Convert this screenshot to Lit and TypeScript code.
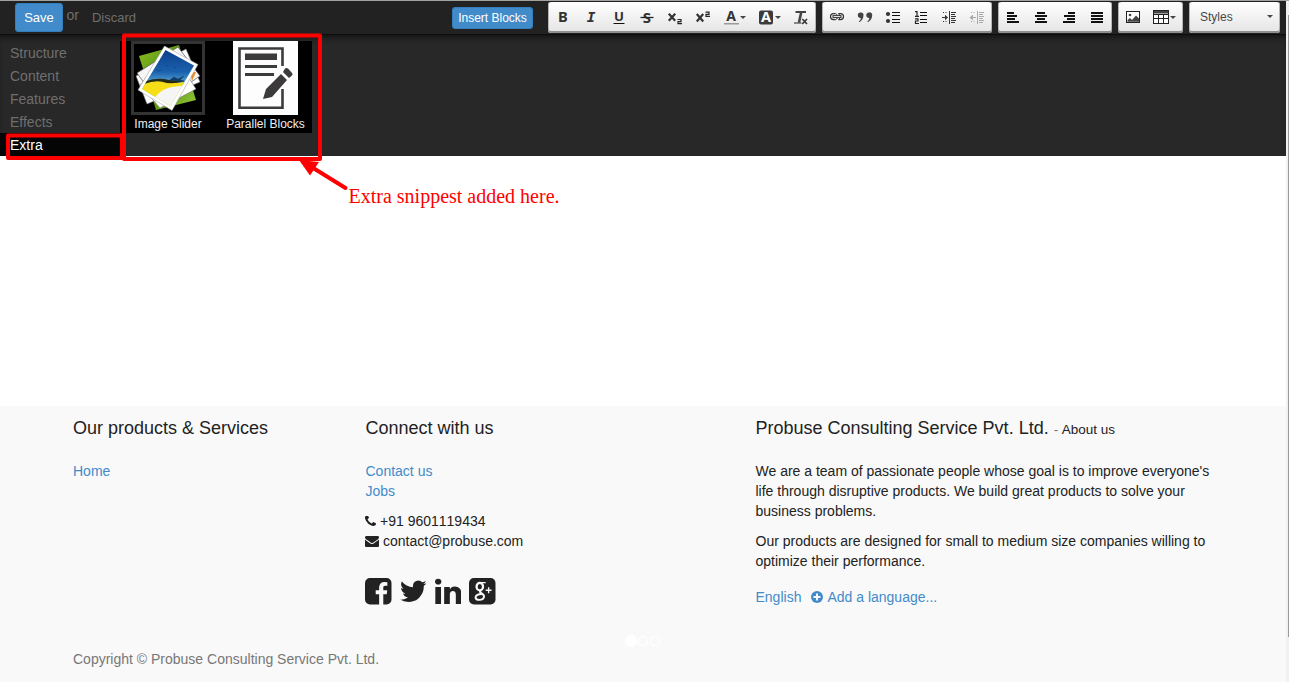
import { LitElement, html, css, svg } from "lit";
import { customElement } from "lit/decorators.js";

const letter = (t: string, size: number, y: number, extra = "") =>
  svg`<text x="8" y=${y} font-size=${size} text-anchor="middle" class="g ${extra}">${t}</text>`;
const rows = (spans: number[][]) =>
  spans.map(([x, y, w]) => svg`<rect x=${x} y=${y} width=${w} height="2" fill="#111"/>`);
const thin = (spans: number[][], c = "#222") =>
  spans.map(([x, y, w]) => svg`<rect x=${x} y=${y} width=${w} height="1" fill=${c}/>`);

const indent = (c: string, flip: boolean) => svg`
  <path d="M8.500 2v13" stroke=${c}/>
  ${thin([[10, 3, 5], [10, 5, 4], [10, 7, 5], [10, 9, 4], [10, 11, 5], [10, 13, 4]], c)}
  <path d="M2 3.500h5M2 12.500h5" stroke=${c} stroke-dasharray="1 1.500"/>
  <path d=${flip ? "M7 8.500H2" : "M1 8.500H6"} stroke=${c}/>
  <path d=${flip ? "M0.500 8.500L4 5.500v6z" : "M7 8.500L4 5.800v5.400z"} fill=${c}/>`;

const ICONS: Record<string, unknown> = {
  bold: letter("B", 14.7, 13.3),
  italic: svg`<text x="8" y="13.300" font-size="14.500" text-anchor="middle" class="mono">I</text>`,
  underline: svg`${letter("U", 13.2, 12.2)}<path d="M2.500 14.500h11" stroke="#111" stroke-width="1"/>`,
  strike: svg`${letter("S", 15, 13.5)}<path d="M1.500 8.500h13" stroke="#222" stroke-width="1.300"/>`,
  sub: svg`<path d="M1.800 4.800l6.400 7M8.200 4.800l-6.400 7" stroke="#333" stroke-width="2.200"/><path d="M10.500 10.500h3.500v2.200h-3v2h4" fill="none" stroke="#222" stroke-width="1.200"/>`,
  sup: svg`<path d="M1.800 5l6.400 7.500M8.200 5l-6.400 7.500" stroke="#333" stroke-width="2.200"/><path d="M10.500 3.200h3.500v2.200h-3v2h4" fill="none" stroke="#222" stroke-width="1.200"/>`,
  color: svg`${letter("A", 14, 12.4)}<rect x="1" y="14" width="15" height="1.500" fill="#999"/>`,
  back: svg`<rect x="1" y="1.500" width="14" height="14" rx="2" fill="#3b3b3b"/>${letter("A", 14.5, 13.4, "inv")}`,
  clear: svg`<path d="M2.500 3h10.500" stroke="#444" stroke-width="2"/><path d="M8.300 3L6 13.500" stroke="#444" stroke-width="2.600"/><path d="M1 14h7.500" stroke="#222"/><path d="M9.300 10l4.700 5M14 10l-4.700 5" stroke="#333" stroke-width="1.600"/>`,
  link: svg`<g fill="none" stroke="#333" stroke-width="1.200"><path d="M6.500 4.600H4.500a3 3 0 0 0 0 6h2"/><path d="M9.500 4.600h2a3 3 0 0 1 0 6h-2"/><rect x="4" y="6.600" width="8" height="2" stroke-width="1"/><path d="M6.500 4.600Q8 5 8.300 6.500M9.500 4.600Q10.500 5 10.500 6.500M6.500 10.600q1.500-.3 1.800-1.800M9.500 10.600q1-.3 1-1.800" stroke-width="1"/></g>`,
  quote: svg`<g fill="#444"><path d="M3.500 3.500a2.500 2.500 0 0 1 3 2.800c0 3-1.500 5-4 7l-.7-.7c1.400-1.300 2-2.500 2-3.700A2.600 2.600 0 0 1 .8 6.200a2.700 2.700 0 0 1 2.700-2.700z"/><path d="M12 3.500a2.500 2.500 0 0 1 3.200 2.800c0 3-1.500 5-4.200 7l-.7-.7c1.400-1.300 2-2.500 2-3.700a2.600 2.600 0 0 1-3-2.700A2.700 2.700 0 0 1 12 3.500z"/></g>`,
  ul: svg`<circle cx="3" cy="5" r="2.100" fill="#333"/><circle cx="3" cy="12" r="2.100" fill="#333"/>${thin([[7, 3, 8], [7, 6, 8], [7, 10, 8], [7, 13, 8]], "#111")}`,
  ol: svg`<path d="M2 2.600h2v4.400M2 7.300h4M2 9.800h3v2.200H2.500v2.500h3.500" fill="none" stroke="#222" stroke-width="1.200"/>${thin([[7, 3, 7], [7, 6, 7], [7, 10, 7], [7, 13, 7]], "#111")}`,
  indent: indent("#333", false),
  outdent: indent("#aaa", true),
  left: rows([[2, 3, 7], [2, 6, 10], [2, 9, 8], [2, 12, 12]]),
  center: rows([[4, 3, 8], [2, 6, 12], [4, 9, 8], [2, 12, 12]]),
  right: rows([[7, 3, 7], [3, 6, 11], [6, 9, 8], [2, 12, 12]]),
  justify: rows([[2, 3, 12], [2, 6, 12], [2, 9, 12], [2, 12, 12]]),
  image: svg`<rect x="1.500" y="2.500" width="13" height="11" fill="#fff" stroke="#222"/><circle cx="5" cy="6" r="1.300" fill="#444"/><path d="M2.500 12.800V11l2.500-2 2 2 4-4.500 3 3v3.300z" fill="#444"/>`,
  table: svg`<rect x=".5" y="1.500" width="15" height="13" fill="#fff" stroke="#222"/><rect x="1" y="2" width="14" height="2.500" fill="#444"/><path d="M1 5.500h14M1 9.500h14M5.500 5v9M10.500 5v9" stroke="#222"/>`,
};

const GROUPS: string[][] = [
  ["bold", "italic", "underline", "strike", "sub", "sup", "color+", "back+", "clear"],
  ["link", "quote", "ul", "ol", "indent", "outdent"],
  ["left", "center", "right", "justify"],
  ["image", "table+"],
];

@customElement("editor-toolbar")
export class EditorToolbar extends LitElement {
  static styles = css`
    :host { display: flex; gap: 6px; font: 12px "Liberation Sans", Arial, sans-serif; color: #474747; }
    .group {
      display: flex; align-items: center; box-sizing: border-box; height: 31px; padding: 0 1px;
      border-radius: 3px; background: linear-gradient(#fff, #e4e4e4);
      box-shadow: inset 0 -2px 0 #8f8f8f, inset 1px 0 0 #b4b4b4, inset -1px 0 0 #b4b4b4;
    }
    .btn { display: flex; align-items: center; box-sizing: border-box; width: 28px; height: 28px; padding: 0 6px; margin-top: -1px; }
    .wide { width: 35px; }
    .icon { width: 16px; height: 16px; flex: none; overflow: visible; }
    .caret { flex: none; margin: 0 0 0 1px; border: 3px solid transparent; border-top-color: #474747; border-bottom: 0; }
    .g { font-family: "Noto Sans", "DejaVu Sans", sans-serif; font-weight: 700; fill: #333; }
    .inv { fill: #fff; }
    .mono { font-family: "DejaVu Sans Mono", monospace; font-weight: 700; font-style: italic; fill: #333; }
    .styles { width: 91px; justify-content: space-between; padding: 0 7px 2px 11px; }
  `;
  render() {
    return html`${GROUPS.map(
      (g) => html`<div class="group">${g.map((k) => {
        const wide = k.endsWith("+");
        return html`<span class="btn ${wide ? "wide" : ""}"
          ><svg class="icon" viewBox="0 0 16 16">${ICONS[k.replace("+", "")]}</svg>${wide ? html`<i class="caret"></i>` : ""}</span>`;
      })}</div>`
    )}<div class="group styles"><span>Styles</span><i class="caret"></i></div>`;
  }
}

const slider = svg`
  <defs>
    <linearGradient id="sky" x1="0" y1="0" x2="0" y2="1"><stop offset="0" stop-color="#0b3a86"/><stop offset=".4" stop-color="#1b62ae"/><stop offset=".65" stop-color="#6fbce2"/></linearGradient>
    <linearGradient id="leaf" x1="0" y1="0" x2="1" y2="1"><stop offset="0" stop-color="#8dbf22"/><stop offset=".5" stop-color="#4f8a10"/><stop offset="1" stop-color="#9acb3a"/></linearGradient>
    <clipPath id="photo"><path d="M31.500 6L60 21.500 36.500 62 8 45z"/></clipPath>
  </defs>
  <path d="M5 12L45 1 62 56 22 66z" fill="url(#leaf)"/>
  <path d="M2 32L52 5 66 38 13 60z" fill="#fff" stroke="#777" stroke-width=".6"/>
  <path d="M3 29L44 3 66 32 25 60z" fill="#f6f6f6" stroke="#555" stroke-width=".7"/>
  <path d="M56 28l6 0-4 9z" fill="#ed8b22"/>
  <path d="M6 41L36 4 62 45 26 64z" fill="#fff" stroke="#777" stroke-width=".6"/>
  <path d="M30.500 2L64 20.500 38 66.500 4 46z" fill="#fff" stroke="#999" stroke-width=".5"/>
  <g clip-path="url(#photo)">
    <rect x="4" y="4" width="60" height="60" fill="url(#sky)"/>
    <path d="M8 39q14-6 25-2 9 3 17 1L38 64 6 48z" fill="#f6df16"/>
    <path d="M12 37q12-4 23-1l16 1q-14 4-22 1-8-2-19 2z" fill="#242b16"/>
    <path d="M20 55q8-14 32-13L38 64z" fill="#f5f5f5"/>
    <path d="M36 36l4-3 4 2 6-3-4 4 4 1-7 0-4-1z" fill="#123d66" stroke="#123d66" stroke-width=".5"/>
    <path d="M22 26l3 1 3-1M31 21l3 1M39 23l3 1" fill="none" stroke="#124a86" stroke-width=".9"/>
  </g>`;

const blocks = svg`
  <rect width="65" height="74" fill="#fdfdfd"/>
  <path d="M49.500 25V7.500H6.500v59.300h43V48" fill="none" stroke="#3c3a3b" stroke-width="2.600"/>
  <g fill="#3c3a3b"><rect x="12" y="12.500" width="32" height="6.500"/><rect x="12" y="24" width="32" height="3"/><rect x="12" y="32" width="29" height="3"/>
  <path d="M48 33l6 6-15 17-9 2 3-10zM50 31l2-3.500q1.500-1 3 0L59 32q1 1 .2 2.200L56 37z"/></g>`;

@customElement("snippet-panel")
export class SnippetPanel extends LitElement {
  static styles = css`
    :host { display: flex; height: 121px; background: #282828; font: 14px/23px "Liberation Sans", Arial, sans-serif; color: #6f6f6f; box-shadow: inset 0 6px 6px -4px #111; }
    .nav { width: 120px; padding-top: 6px; }
    .item { box-sizing: border-box; padding: 1px 0 0 10px; height: 23px; }
    .active { background: #050505; color: #fff; }
    .shelf { display: flex; box-sizing: border-box; margin-top: 6px; padding-left: 0.5px; width: 192px; height: 92px; background: #000; color: #eee; font-size: 12px; line-height: 18px; }
    .tile { display: flex; flex: none; flex-direction: column; align-items: center; white-space: nowrap; }
    .first { width: 95px; }
    .second { width: 100px; }
    .frame { box-sizing: border-box; width: 74px; height: 74px; border: 3px solid #333; }
    .page { width: 65px; height: 74px; }
  `;
  render() {
    return html`<div class="nav">${["Structure", "Content", "Features", "Effects", "Extra"].map(
        (n) => html`<div class="item ${n === "Extra" ? "active" : ""}">${n}</div>`
      )}</div>
      <div class="shelf">
        <div class="tile first"><svg class="frame" viewBox="0 0 68 68">${slider}</svg><span>Image Slider</span></div>
        <div class="tile second"><svg class="page" viewBox="0 0 65 74">${blocks}</svg><span>Parallel Blocks</span></div>
      </div>`;
  }
}

const FB = "M1376 128q119 0 203.500 84.500t84.500 203.500v960q0 119-84.500 203.500t-203.500 84.500h-188v-595h199l30-232h-229v-148q0-56 23.500-84t91.500-28l122-1v-207q-63-9-178-9-136 0-217.500 80t-81.500 226v171h-200v232h200v595h-532q-119 0-203.500-84.500t-84.500-203.500v-960q0-119 84.500-203.500t203.500-84.500h960z";
const TW = "M1684 408q-67 98-162 167 1 14 1 42 0 130-38 259.500t-115.500 248.500-184.500 210.500-258 146-323 54.500q-271 0-496-145 35 4 78 4 225 0 401-138-105-2-188-64.500t-114-159.500q33 5 61 5 43 0 85-11-112-23-185.500-111.500t-73.500-205.500v-4q68 38 146 41-66-44-105-115t-39-154q0-88 44-163 121 149 294.500 238.500t371.500 99.500q-8-38-8-74 0-134 94.500-228.500t228.500-94.500q140 0 236 102 109-21 205-78-37 115-142 178 93-10 186-50z";
const LI = "M477 625v991h-330v-991h330zm21-306q1 73-50.500 122t-135.500 49h-2q-82 0-132-49t-50-122q0-74 51.500-122.500t134.500-48.500 133 48.500 51 122.500zm1166 729v568h-329v-530q0-105-40.500-164.500t-126.500-59.500q-63 0-105.500 34.500t-63.500 85.500q-11 30-11 81v553h-329q2-399 2-647t-1-296l-1-48h329v144h-2q20-32 41-56t56.500-52 87-43.500 114.500-15.500q171 0 275 113.500t104 332.500z";
const PHONE = "M1600 1240q0 27-10 70.500t-21 68.500q-21 50-122 106-94 51-186 51-27 0-53-3.500t-57.500-12.500-47-14.500-55.500-20.500-49-18q-98-35-175-83-127-79-264-216t-216-264q-48-77-83-175-3-9-18-49t-20.500-55.500-14.500-47-12.500-57.500-3.500-53q0-92 51-186 56-101 106-122 25-11 68.500-21t70.500-10q14 0 21 3 18 6 53 76 11 19 30 54t35 63.500 31 53.500q3 4 17.500 25t21.500 35.500 7 28.500q0 20-28.500 50t-62 55-62 53-28.500 46q0 9 5 22.500t8.500 20.500 14 24 11.500 19q76 137 174 235t235 174q2 1 19 11.500t24 14 20.500 8.500 22.500 5q18 0 46-28.500t53-62 55-62 50-28.500q14 0 28.500 7t35.500 21.500 25 17.500q25 15 53.500 31t63.500 35 54 30q70 35 76 53 3 7 3 21z";
const MAIL = "M1792 710v794q0 66-47 113t-113 47h-1472q-66 0-113-47t-47-113v-794q44 49 101 87 362 246 497 345 57 42 92.500 65.500t94.500 48 110 24.500h2q51 0 110-24.500t94.500-48 92.500-65.500q170-123 498-345 57-39 100-87zm0-294q0 79-49 151t-122 123q-376 261-468 325-10 7-42.500 31t-54 38.500-52 32.500-57.500 27-50 9h-2q-23 0-50-9t-57.500-27-52-32.500-54-38.500-42.500-31q-91-64-262-182.500t-205-142.500q-62-42-117-115.500t-55-136.500q0-78 41.500-130t118.500-52h1472q65 0 112.500 47t47.500 113z";

@customElement("site-footer")
export class SiteFooter extends LitElement {
  static styles = css`
    :host { display: block; position: relative; height: 276px; background: #f9f9f9; font: 14px/20px "Liberation Sans", Arial, sans-serif; color: #222; }
    .grid { display: grid; grid-template-columns: 292.5px 390px 487px; padding: 12px 0 0 73px; height: 231px; box-sizing: border-box; }
    h4 { height: 20px; margin: 0 0 23px; font-size: 18px; line-height: 20px; font-weight: 400; white-space: nowrap; }
    small { font-size: 13.5px; line-height: 1; }
    .dash { color: #777; margin-right: 0.6px; }
    .link { color: #428bca; }
    p { margin: 0 0 10px; }
    .line { display: flex; align-items: center; gap: 4px; height: 20px; margin-left: -0.5px; }
    .contact { margin-top: 10px; font-kerning: none; }
    .phone { width: 11px; height: 11px; }
    .mail { width: 14px; height: 12px; }
    .social { display: flex; gap: 8.3px; margin: 27px 0 0 -0.5px; }
    .soc { width: 26.5px; height: 26.5px; fill: #222; }
    .about { width: 465px; }
    .lang { display: flex; align-items: center; margin-top: 16px; }
    .plus { width: 12px; height: 12px; margin: 0 4px 0 10px; }
    .copy { padding: 12px 0 0 73px; color: #777; }
    .dots { position: absolute; left: 625px; top: 229px; width: 38px; height: 12px; }
  `;
  render() {
    return html`<div class="grid">
        <div><h4>Our products &amp; Services</h4><span class="link">Home</span></div>
        <div>
          <h4>Connect with us</h4>
          <div class="link">Contact us</div><div class="link">Jobs</div>
          <div class="line contact"><svg class="phone" viewBox="192 256 1408 1408"><path d=${PHONE} fill="#222"/></svg><span>+91 9601119434</span></div>
          <div class="line"><svg class="mail" viewBox="0 128 1792 1536"><path d=${MAIL} fill="#222"/></svg><span>contact@probuse.com</span></div>
          <div class="social">
            <svg class="soc" viewBox="128 128 1536 1536"><path d=${FB}/></svg>
            <svg class="soc" viewBox="108 128 1576 1536"><path d=${TW}/></svg>
            <svg class="soc" viewBox="128 110 1536 1536"><path d=${LI}/></svg>
            <svg class="soc" viewBox="0 0 27 27"><rect width="27" height="27" rx="5"/>
              <g fill="none" stroke="#f8f8f8"><ellipse cx="11" cy="8.800" rx="3.300" ry="3.800" stroke-width="2.300"/><path d="M11 4.700h6" stroke-width="1.300"/><path d="M12.500 12.500q-2.500 1.300-.3 2.600 3.300 2 3.100 4-.4 3.200-4.600 3.200-4 0-4-2.500.2-3.200 6.500-3.400" stroke-width="2"/><path d="M20 9.500v6M17 12.500h6" stroke-width="1.400"/></g></svg>
          </div>
        </div>
        <div>
          <h4>Probuse Consulting Service Pvt. Ltd. <small><span class="dash">-</span> About us</small></h4>
          <div class="about">
            <p>We are a team of passionate people whose goal is to improve everyone's life through disruptive products. We build great products to solve your business problems.</p>
            <p>Our products are designed for small to medium size companies willing to optimize their performance.</p>
          </div>
          <div class="lang link"><span>English</span><svg class="plus" viewBox="0 0 12 12"><circle cx="6" cy="6" r="6" fill="#428bca"/><path d="M6 2.500v7M2.500 6h7" stroke="#f8f8f8" stroke-width="2"/></svg><span>Add a language...</span></div>
        </div>
      </div>
      <div class="copy">Copyright © Probuse Consulting Service Pvt. Ltd.</div>
      <svg class="dots" viewBox="0 0 38 12"><circle cx="6" cy="6" r="6" fill="#fff"/><circle cx="18" cy="6" r="4.600" fill="none" stroke="#fff" stroke-width="1.200"/><circle cx="30" cy="6" r="4.600" fill="none" stroke="#fff" stroke-width="1.200"/></svg>`;
  }
}

@customElement("app-root")
export class AppRoot extends LitElement {
  static styles = css`
    :host { display: flex; position: relative; width: 1289px; height: 682px; overflow: hidden; background: #fff; font-family: "Liberation Sans", Arial, sans-serif; }
    .page { width: 1286px; display: flex; flex-direction: column; }
    .bar { display: flex; box-sizing: border-box; height: 35px; padding-left: 15px; background: #222; border-top: 1px solid #a0a29f; border-bottom: 1px solid #0c0c0c; font-size: 13px; color: #6f6f6f; }
    .save { box-sizing: border-box; width: 48px; height: 29px; margin-top: 2px; border: 1px solid #357ebd; border-radius: 3px; background: #428bca; color: #fff; text-align: center; line-height: 27px; }
    .or { margin: 4px 13px 0 3.5px; font-size: 14px; line-height: 20px; }
    .discard { line-height: 20px; margin-top: 7px; }
    .insert { box-sizing: border-box; width: 81px; height: 22px; margin: 6px 15px 0 auto; border: 1px solid #357ebd; border-radius: 3px; background: #428bca; color: #fff; font-size: 12px; line-height: 20px; text-align: center; white-space: nowrap; }
    .tools { margin: 1px 6px 0 0; }
    .canvas { height: 250px; }
    .scroll { width: 3px; background: #f1f1f1; border-top: 1px solid #a0a29f; box-sizing: border-box; }
    .thumb { width: 1px; height: 622px; margin: 14px 0 0 2px; background: #999; }
    .marks { position: absolute; left: 0; top: 0; width: 600px; height: 220px; }
    .note { font: 20px "Liberation Serif", "Times New Roman", serif; fill: #f00; }
  `;
  render() {
    return html`<div class="page">
        <div class="bar">
          <span class="save">Save</span><span class="or">or</span><span class="discard">Discard</span>
          <span class="insert">Insert Blocks</span><editor-toolbar class="tools"></editor-toolbar>
        </div>
        <snippet-panel></snippet-panel>
        <div class="canvas"></div>
        <site-footer></site-footer>
      </div>
      <div class="scroll"><div class="thumb"></div></div>
      <svg class="marks" viewBox="0 0 600 220">
        <g fill="none" stroke="#f00" stroke-width="4" stroke-linejoin="round"><rect x="124" y="35.500" width="196" height="123.500"/><rect x="8" y="135.500" width="114" height="22.500"/></g>
        <path d="M314 168.500L345.500 188" stroke="#f00" stroke-width="4" stroke-linecap="round"/><path d="M299 160l20 2-9 13.500z" fill="#f00"/>
        <text class="note" x="348.500" y="203">Extra snippest added here.</text>
      </svg>`;
  }
}
